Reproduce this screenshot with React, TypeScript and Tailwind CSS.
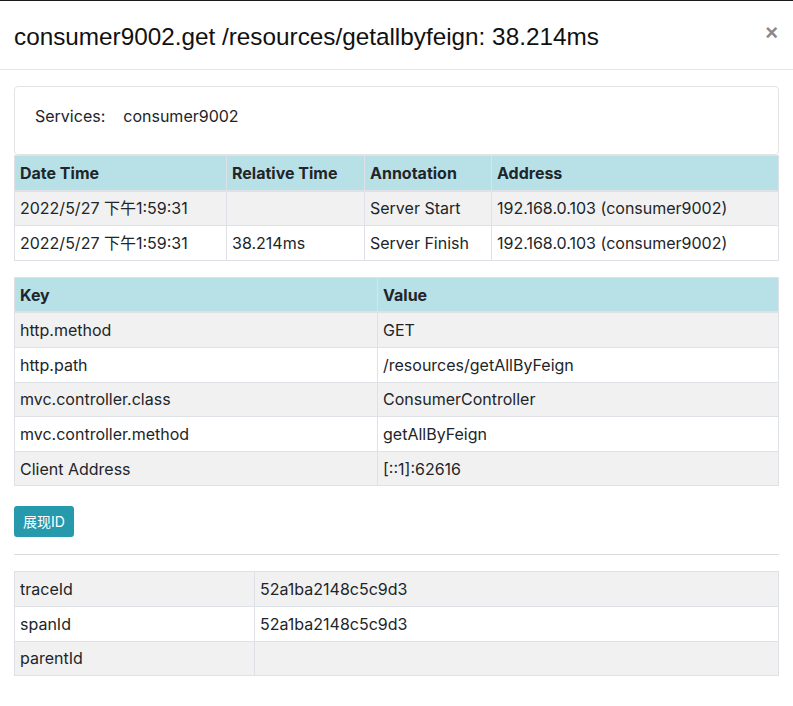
import React from "react";

const cell = "border border-[#dee2e6] px-[5px] py-[4.8px] leading-6 text-left align-top";
const head = "border border-[#dee2e6] border-b-2 px-[5px] py-[4.8px] leading-6 text-left font-bold bg-[#b8e1e7]";

function Row({ cells, striped, widths }: { cells: string[]; striped: boolean; widths?: string[] }) {
  return (
    <tr className={striped ? "bg-[#f1f1f1]" : "bg-white"}>
      {cells.map((c, i) => (
        <td key={i} className={cell + (widths ? " " + widths[i] : "")}>{c}</td>
      ))}
    </tr>
  );
}

export default function App() {
  const t1 = [
    ["2022/5/27 下午1:59:31", "", "Server Start", "192.168.0.103 (consumer9002)"],
    ["2022/5/27 下午1:59:31", "38.214ms", "Server Finish", "192.168.0.103 (consumer9002)"],
  ];
  const t2 = [
    ["http.method", "GET"],
    ["http.path", "/resources/getAllByFeign"],
    ["mvc.controller.class", "ConsumerController"],
    ["mvc.controller.method", "getAllByFeign"],
    ["Client Address", "[::1]:62616"],
  ];
  const t3 = [
    ["traceId", "52a1ba2148c5c9d3"],
    ["spanId", "52a1ba2148c5c9d3"],
    ["parentId", ""],
  ];
  return (
    <div
      className="w-[793px] h-[706px] bg-white text-[#212529] text-[16px] border-t border-[#1a1a1a] overflow-hidden"
      style={{ fontFamily: "Inter, 'Noto Sans CJK SC', sans-serif" }}
    >
      <div className="h-[69px] border-b border-[#e5e5e5] flex items-center justify-between pl-[14px] pr-[14px]">
        <div
          className="text-[24.3px] leading-none text-[#111] mt-[4px]"
          style={{ fontFamily: "'Liberation Sans', Arial, sans-serif" }}
        >
          consumer9002.get /resources/getallbyfeign: 38.214ms
        </div>
        <div
          className="text-[22px] font-bold leading-none text-[#8a8a8a] mt-[-5px] mr-[1px]"
          style={{ fontFamily: "'Liberation Sans', Arial, sans-serif" }}
        >
          ×
        </div>
      </div>
      <div className="px-[14px] pt-[16px]">
        <div className="h-[69px] border border-[#e3e3e3] rounded-[4px] flex items-center pl-[20px] pb-[9px]">
          <span>Services:</span>
          <span className="ml-[18px]">consumer9002</span>
        </div>
        <table className="w-full border-collapse mb-[16px]">
          <thead>
            <tr>
              <th className={head + " w-[212px]"}>Date Time</th>
              <th className={head + " w-[138px]"}>Relative Time</th>
              <th className={head + " w-[127px]"}>Annotation</th>
              <th className={head}>Address</th>
            </tr>
          </thead>
          <tbody>
            {t1.map((r, i) => (
              <Row key={i} cells={r} striped={i % 2 === 0} />
            ))}
          </tbody>
        </table>
        <table className="w-full border-collapse mb-[20px]">
          <thead>
            <tr>
              <th className={head + " w-[363px]"}>Key</th>
              <th className={head}>Value</th>
            </tr>
          </thead>
          <tbody>
            {t2.map((r, i) => (
              <Row key={i} cells={r} striped={i % 2 === 0} />
            ))}
          </tbody>
        </table>
        <button className="h-[31px] px-[9px] rounded-[3px] bg-[#2799ad] text-white text-[14px] leading-none block">
          展现ID
        </button>
        <div className="border-t border-[#dcdcdc] mt-[17px] mb-[16px]" />
        <table className="w-full border-collapse">
          <tbody>
            {t3.map((r, i) => (
              <Row key={i} cells={r} striped={i % 2 === 0} widths={["w-[240px]", ""]} />
            ))}
          </tbody>
        </table>
      </div>
    </div>
  );
}
